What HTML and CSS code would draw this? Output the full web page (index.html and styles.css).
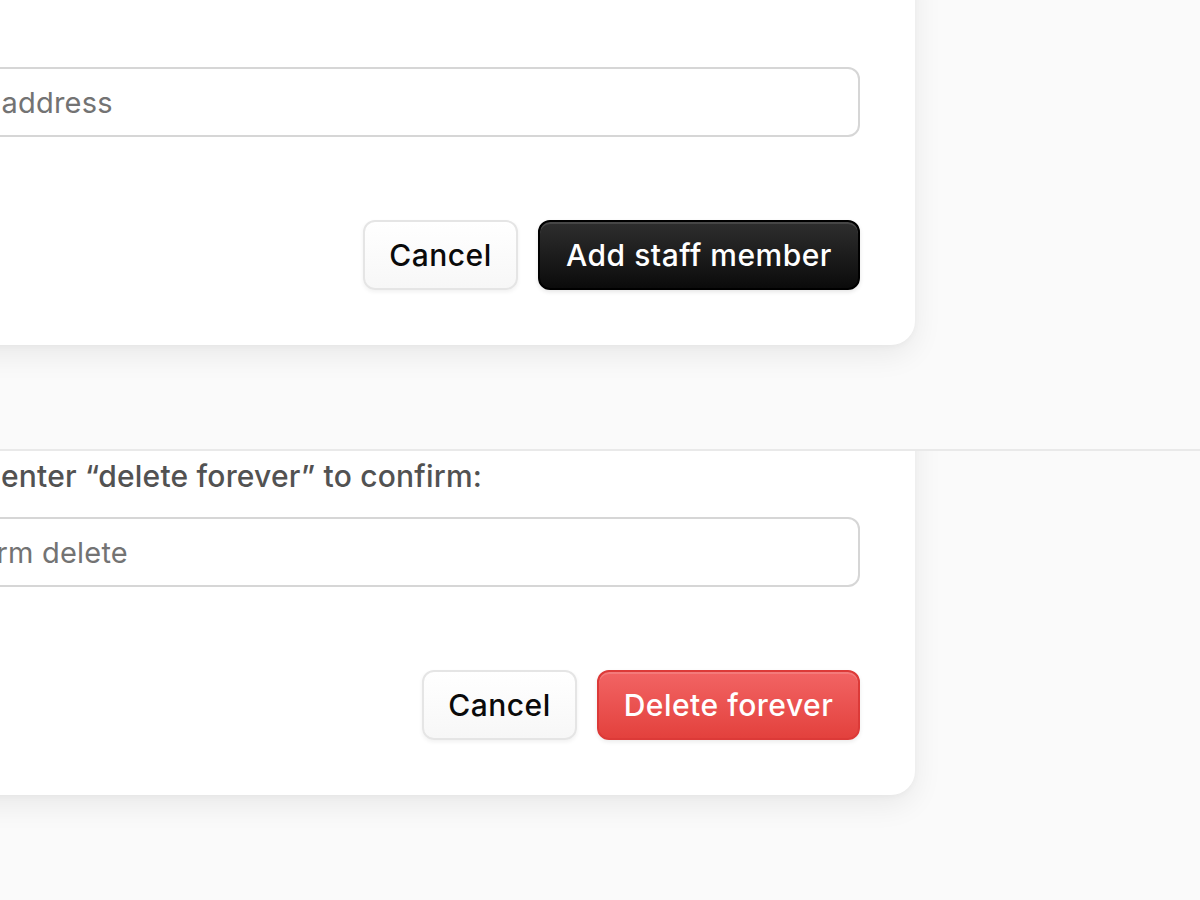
FILE: index.html
```html
<!DOCTYPE html>
<html>
<head>
<meta charset="utf-8">
<link rel="stylesheet" href="styles.css">
</head>
<body>
<section class="panel panel-top">
  <div class="card">
    <div class="field">
      <input class="input" type="text" placeholder="Email address">
    </div>
    <div class="actions">
      <button class="btn btn-secondary">Cancel</button>
      <button class="btn btn-dark">Add staff member</button>
    </div>
  </div>
</section>
<section class="panel panel-bottom">
  <div class="card">
    <div class="field">
      <label class="label">enter “delete forever” to confirm:</label>
      <input class="input" type="text" placeholder="Confirm delete">
    </div>
    <div class="actions">
      <button class="btn btn-secondary">Cancel</button>
      <button class="btn btn-danger">Delete forever</button>
    </div>
  </div>
</section>
</body>
</html>
```
FILE: styles.css
```css
* { box-sizing: border-box; }
html, body { margin: 0; padding: 0; }
body {
  background: #fafafa;
  font-family: Inter, "Noto Sans", sans-serif;
  width: 1200px;
  height: 900px;
  overflow: hidden;
}
.panel {
  overflow: hidden;
  display: flex;
  flex-direction: column;
  justify-content: flex-end;
}
.panel-top {
  height: 451px;
  border-bottom: 2px solid #e9e9e9;
  padding-bottom: 104px;
}
.panel-bottom {
  height: 449px;
  padding-bottom: 105px;
}
.card {
  flex: none;
  width: 1300px;
  margin-left: -385px;
  background: #ffffff;
  border-radius: 24px;
  box-shadow: 0 10px 30px rgba(0, 0, 0, 0.07), 0 2px 6px rgba(0, 0, 0, 0.03);
  padding: 120px 55px 55px 55px;
  display: flex;
  flex-direction: column;
  gap: 83px;
}
.field {
  display: flex;
  flex-direction: column;
  gap: 21px;
}
.label {
  font-size: 30px;
  line-height: 40px;
  font-weight: 500;
  letter-spacing: 0.2px;
  color: #525252;
  padding-left: 331px;
  white-space: nowrap;
}
.input {
  display: block;
  width: 100%;
  height: 70px;
  border: 2px solid #d6d6d6;
  border-radius: 12px;
  background: #fff;
  font-family: Inter, "Noto Sans", sans-serif;
  font-size: 29px;
  letter-spacing: 0.2px;
  padding: 0 24px;
  color: #171717;
  outline: none;
}
.panel-top .input { padding-left: 247px; }
.panel-bottom .input { padding-left: 250px; }
.input::placeholder { color: #737373; }
.actions {
  display: flex;
  justify-content: flex-end;
  gap: 20px;
}
.btn {
  height: 70px;
  border-radius: 12px;
  font-family: Inter, "Noto Sans", sans-serif;
  font-size: 30px;
  font-weight: 500;
  letter-spacing: 0.5px;
  padding: 0 10px;
  cursor: pointer;
}
.btn-secondary {
  width: 155px;
  color: #0a0a0a;
  background: linear-gradient(#ffffff, #f7f7f7);
  border: 2px solid #e5e5e5;
  box-shadow: 0 2px 4px rgba(0, 0, 0, 0.06);
}
.btn-dark {
  width: 322px;
  color: #ffffff;
  background: linear-gradient(#2e2e2e, #0b0b0b);
  border: 2px solid #000000;
  box-shadow: inset 0 2px 0 rgba(255, 255, 255, 0.12), 0 2px 4px rgba(0, 0, 0, 0.1);
}
.btn-danger {
  width: 263px;
  color: #ffffff;
  background: linear-gradient(#f26464, #e3413d);
  border: 2px solid #dc3a38;
  box-shadow: inset 0 2px 0 rgba(255, 255, 255, 0.15), 0 2px 4px rgba(0, 0, 0, 0.08);
}
```
